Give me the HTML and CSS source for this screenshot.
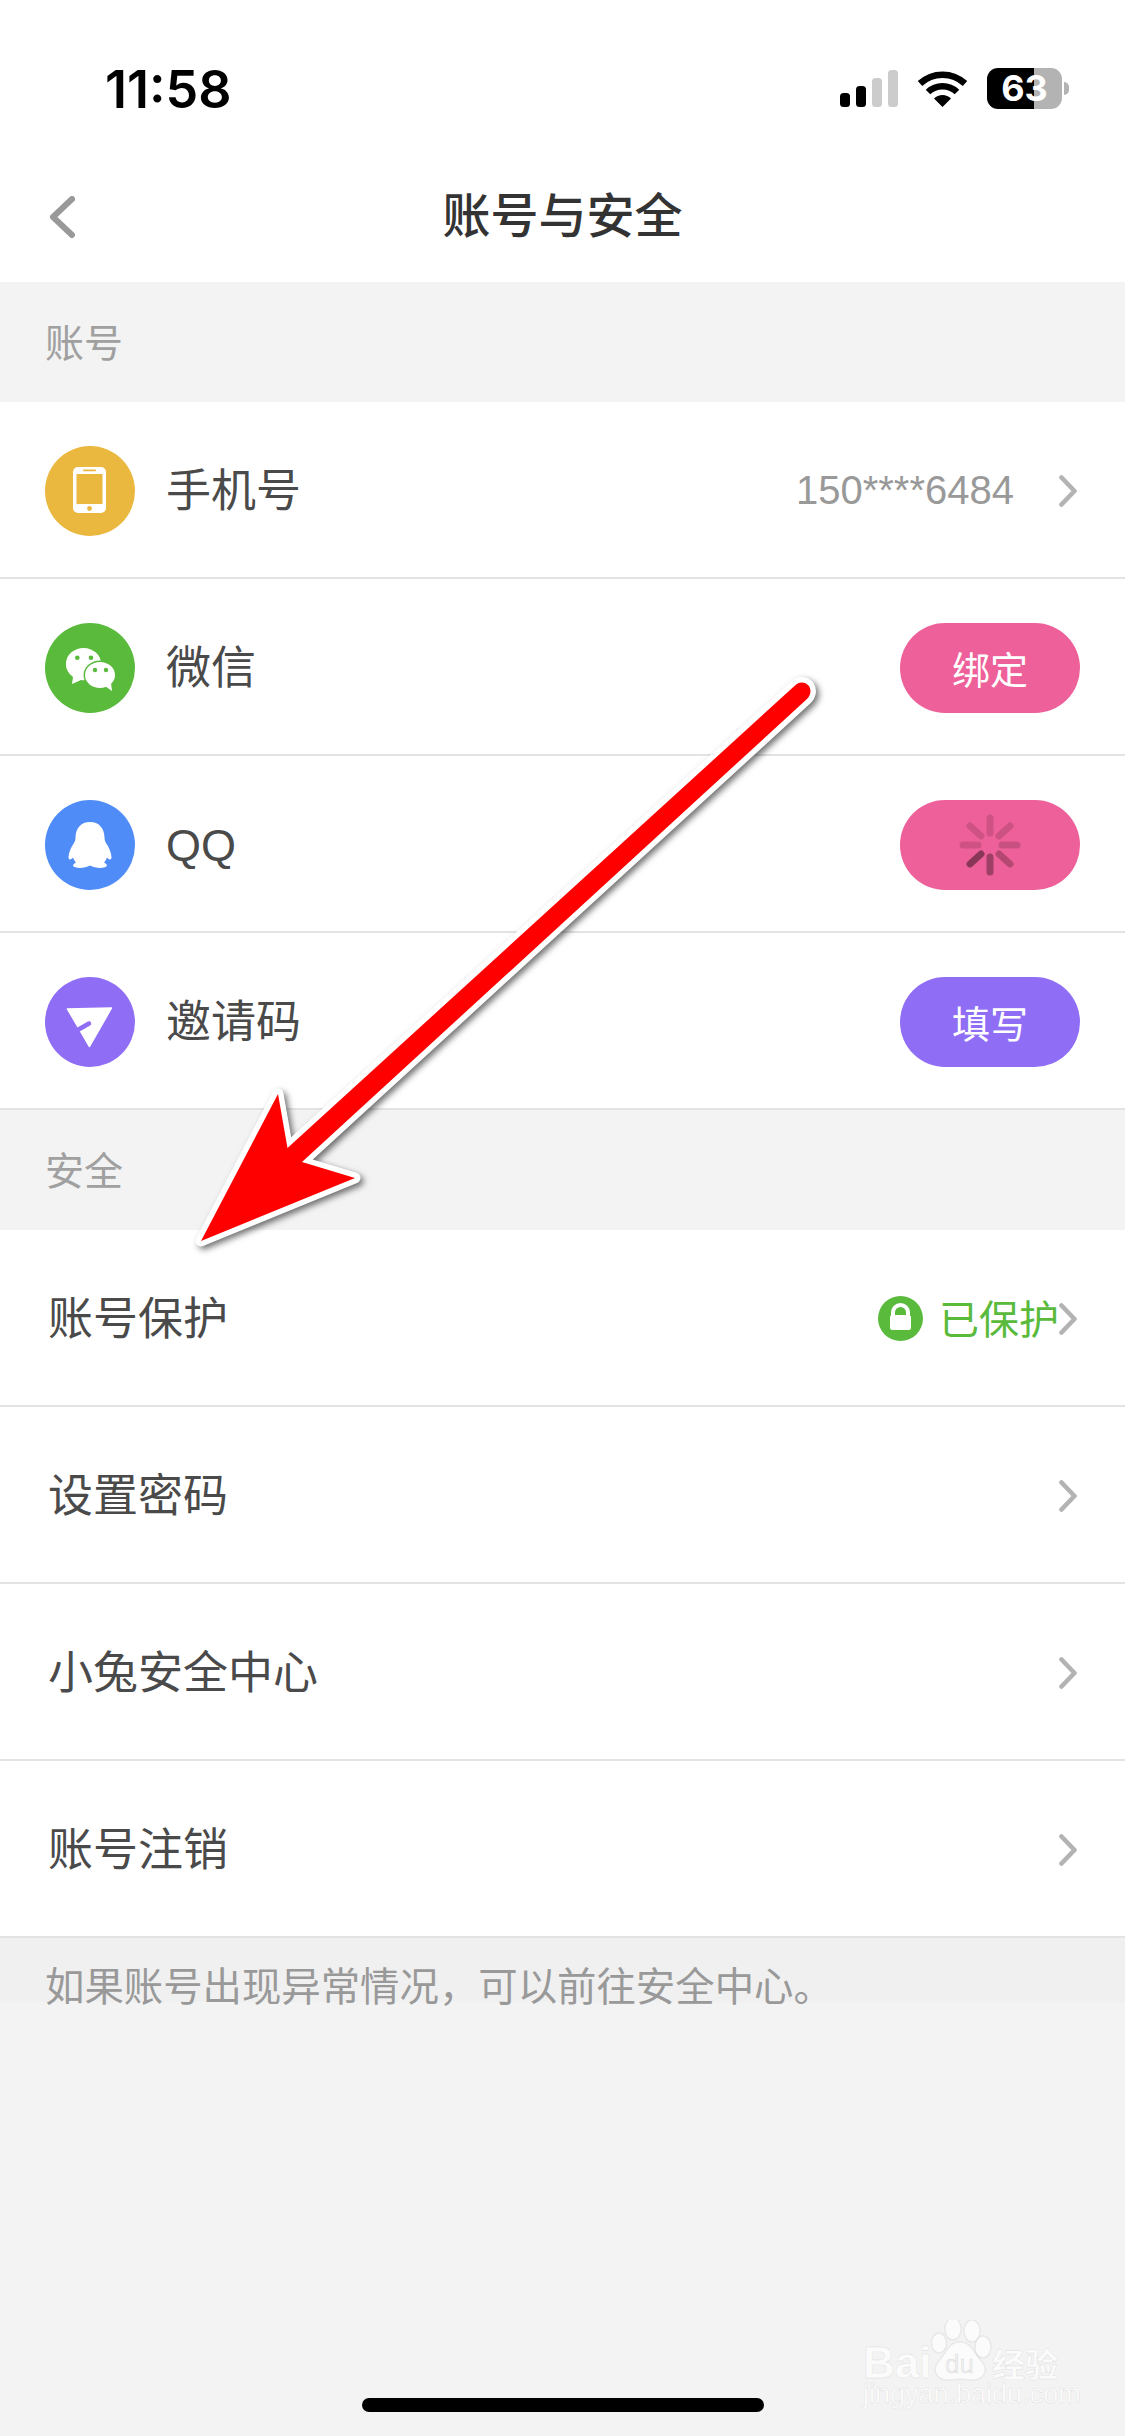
FILE: index.html
```html
<!DOCTYPE html>
<html lang="zh-CN">
<head>
<meta charset="utf-8">
<title>账号与安全</title>
<link rel="stylesheet" href="styles.css">
</head>
<body>
<div class="page">
  <header class="top">
    <div class="status">
      <span class="time">11:58</span>
      <div class="status-icons">
        <svg class="signal" width="58" height="37" viewBox="0 0 58 37"><rect x="0" y="23" width="10" height="14" rx="3.5" fill="#000"/><rect x="16" y="16" width="10" height="21" rx="3.5" fill="#000"/><rect x="32" y="8" width="10" height="29" rx="3.5" fill="#ccc"/><rect x="48" y="0" width="10" height="37" rx="3.5" fill="#ccc"/></svg>
        <svg class="wifi" width="51" height="37" viewBox="0 0 51 37"><path d="M3 13.5A33 33 0 0 1 48 13.5" fill="none" stroke="#000" stroke-width="6.5"/><path d="M11 22A21 21 0 0 1 40 22" fill="none" stroke="#000" stroke-width="6.5"/><path d="M25.5 37L17 28.5A12 12 0 0 1 34 28.5Z" fill="#000"/></svg>
        <div class="battery-wrap"><div class="battery">63</div><span class="battery-tip"></span></div>
      </div>
    </div>
    <nav class="nav">
      <svg class="back" width="26" height="42" viewBox="0 0 26 42"><path d="M23 3L4 21L23 39" fill="none" stroke="#999" stroke-width="6" stroke-linecap="round" stroke-linejoin="round"/></svg>
      <h1 class="title">账号与安全</h1>
    </nav>
  </header>

  <div class="section-head">账号</div>
  <ul class="list">
    <li class="row">
      <div class="row-left">
        <span class="circle c-yellow"><svg width="90" height="90" viewBox="0 0 90 90"><rect x="28" y="21" width="33" height="46" rx="5" fill="#fff"/><rect x="31.5" y="28" width="26" height="30" fill="#ebb83f"/><rect x="38" y="23.5" width="13" height="1.8" rx=".9" fill="#ebb83f"/><circle cx="44.5" cy="62.5" r="2.4" fill="#ebb83f"/></svg></span>
        <span class="label">手机号</span>
      </div>
      <div class="row-right">
        <span class="phone">150****6484</span>
        <svg class="chev" width="18" height="32" viewBox="0 0 18 32"><path d="M2.5 2.5L15.5 16L2.5 29.5" fill="none" stroke="#b3b3b3" stroke-width="4.6" stroke-linecap="round" stroke-linejoin="round"/></svg>
      </div>
    </li>
    <li class="row">
      <div class="row-left">
        <span class="circle c-green"><svg width="90" height="90" viewBox="0 0 90 90"><path d="M27 61L28 54A17.5 15.5 0 1 1 36 57Z" fill="#fff"/><ellipse cx="38.5" cy="40.5" rx="17.5" ry="15.5" fill="#fff"/><circle cx="32.3" cy="34.7" r="2.3" fill="#59ba3c"/><circle cx="46" cy="34.7" r="2.3" fill="#59ba3c"/><ellipse cx="55" cy="52" rx="16.5" ry="14.5" fill="#59ba3c"/><ellipse cx="55" cy="52" rx="15" ry="13" fill="#fff"/><path d="M60 63L67 68L66 60Z" fill="#fff"/><circle cx="50" cy="47" r="2.2" fill="#59ba3c"/><circle cx="61" cy="47" r="2.2" fill="#59ba3c"/></svg></span>
        <span class="label">微信</span>
      </div>
      <div class="row-right"><span class="pill p-pink">绑定</span></div>
    </li>
    <li class="row">
      <div class="row-left">
        <span class="circle c-blue"><svg width="90" height="90" viewBox="0 0 90 90"><path d="M45 22C36 22 31 28 30.500 37C30.500 40 30 41 29 43C26 47 24 52 23.500 57C23.500 60 25 60.500 28 57.500C29 60 30 61.500 31 62.500C28.500 64 27.500 65 28.500 66.500C31 68.500 40 68.500 45 65.500C50 68.500 59 68.500 61.500 66.500C62.500 65 61.500 64 59 62.500C60 61.500 61 60 62 57.500C65 60.500 66.500 60 66.500 57C66 52 64 47 61 43C60 41 59.500 40 59.500 37C59 28 54 22 45 22Z" fill="#fff"/></svg></span>
        <span class="label">QQ</span>
      </div>
      <div class="row-right"><span class="pill p-pink">
        <svg width="64" height="64" viewBox="-32 -32 64 64" stroke="#000" stroke-width="7" stroke-linecap="round">
          <line x1="0" y1="-12" x2="0" y2="-27" opacity=".13"/>
          <line x1="9" y1="-9" x2="20" y2="-19" opacity=".14"/>
          <line x1="12" y1="0" x2="27" y2="0" opacity=".15"/>
          <line x1="9" y1="9" x2="20" y2="19" opacity=".24"/>
          <line x1="0" y1="12" x2="0" y2="27" opacity=".33"/>
          <line x1="-9" y1="9" x2="-20" y2="19" opacity=".42"/>
          <line x1="-12" y1="0" x2="-27" y2="0" opacity=".13"/>
          <line x1="-9" y1="-9" x2="-20" y2="-19" opacity=".13"/>
        </svg></span></div>
    </li>
    <li class="row">
      <div class="row-left">
        <span class="circle c-purple"><svg width="90" height="90" viewBox="0 0 90 90"><path d="M22.500 32L66.500 31L44.500 69.500Z" fill="#fff" stroke="#fff" stroke-width="1.500" stroke-linejoin="round"/><path d="M24 58L44 46.500" fill="none" stroke="#8f6ef5" stroke-width="4.500" stroke-linecap="round"/></svg></span>
        <span class="label">邀请码</span>
      </div>
      <div class="row-right"><span class="pill p-purple">填写</span></div>
    </li>
  </ul>

  <div class="section-head">安全</div>
  <ul class="list">
    <li class="row plain">
      <span class="label">账号保护</span>
      <div class="row-right">
        <span class="lock"><svg width="45" height="45" viewBox="0 0 45 45"><circle cx="22.500" cy="22.500" r="22.500" fill="#59ba3c"/><path d="M15 20V16.500A7.500 7.500 0 0 1 30 16.500V20" fill="none" stroke="#fff" stroke-width="4"/><rect x="12" y="19" width="21" height="15" rx="2.500" fill="#fff"/></svg></span>
        <span class="safe">已保护</span>
        <svg class="chev tight" width="18" height="32" viewBox="0 0 18 32"><path d="M2.500 2.500L15.500 16L2.500 29.500" fill="none" stroke="#b3b3b3" stroke-width="4.600" stroke-linecap="round" stroke-linejoin="round"/></svg>
      </div>
    </li>
    <li class="row plain">
      <span class="label">设置密码</span>
      <div class="row-right"><svg class="chev" width="18" height="32" viewBox="0 0 18 32"><path d="M2.500 2.500L15.500 16L2.500 29.500" fill="none" stroke="#b3b3b3" stroke-width="4.600" stroke-linecap="round" stroke-linejoin="round"/></svg></div>
    </li>
    <li class="row plain">
      <span class="label">小兔安全中心</span>
      <div class="row-right"><svg class="chev" width="18" height="32" viewBox="0 0 18 32"><path d="M2.500 2.500L15.500 16L2.500 29.500" fill="none" stroke="#b3b3b3" stroke-width="4.600" stroke-linecap="round" stroke-linejoin="round"/></svg></div>
    </li>
    <li class="row plain">
      <span class="label">账号注销</span>
      <div class="row-right"><svg class="chev" width="18" height="32" viewBox="0 0 18 32"><path d="M2.500 2.500L15.500 16L2.500 29.500" fill="none" stroke="#b3b3b3" stroke-width="4.600" stroke-linecap="round" stroke-linejoin="round"/></svg></div>
    </li>
  </ul>
  <div class="foot">如果账号出现异常情况，可以前往安全中心。</div>

  <svg class="arrow" width="1125" height="2436" viewBox="0 0 1125 2436">
    <g class="arrow-g">
      <path d="M809 686C812 691 810 696 807 699L302 1162L355 1178L201 1241L278 1094L287.500 1148L795 685.500C799 681.500 805 681.500 809 686Z" fill="#fff" stroke="#fff" stroke-width="11" stroke-linejoin="round"/>
    </g>
    <path d="M809 686C812 691 810 696 807 699L302 1162L355 1178L201 1241L278 1094L287.500 1148L795 685.500C799 681.500 805 681.500 809 686Z" fill="#f00"/>
  </svg>

  <svg class="mark" width="220" height="100" viewBox="0 0 220 100">
    <g class="paw">
      <ellipse cx="79" cy="23" rx="7.500" ry="10"/>
      <ellipse cx="93" cy="9" rx="8" ry="11"/>
      <ellipse cx="112" cy="11" rx="8" ry="11"/>
      <ellipse cx="123" cy="27" rx="8" ry="11"/>
      <path d="M100 22C112 22 114 34 122 42C130 52 122 61 110 60C104 59 96 59 90 60C80 61 70 53 78 42C86 34 88 22 100 22Z"/>
    </g>
    <text class="mk-bai" x="3" y="58">Bai</text>
    <text class="mk-du" x="85" y="53">du</text>
    <text class="mk-cn" x="132" y="57">经验</text>
    <text class="mk-url" x="3" y="83">jingyan.baidu.com</text>
  </svg>

  <div class="home-bar"></div>
</div>
</body>
</html>
```
FILE: styles.css
```css
* { box-sizing: border-box; }
html, body { margin: 0; padding: 0; }
body {
  width: 1125px;
  height: 2436px;
  overflow: hidden;
  background: #f3f3f3;
  font-family: "Liberation Sans", "Noto Sans CJK SC", sans-serif;
}
.page { position: relative; width: 1125px; height: 2436px; overflow: hidden; }

.top { background: #fff; height: 282px; }
.status {
  height: 148px;
  padding: 68px 56px 39px 105px;
  display: flex;
  align-items: center;
  justify-content: space-between;
}
.time {
  font-family: Inter, "Liberation Sans", sans-serif;
  font-weight: 600;
  font-size: 52px;
  line-height: 41px;
  padding-top: 2px;
  color: #000;
}
.status-icons { display: flex; align-items: center; gap: 19px; }
.status-icons svg { display: block; }
.battery-wrap { display: flex; align-items: center; gap: 2px; }
.battery {
  width: 75px;
  height: 41px;
  border-radius: 11px;
  background: linear-gradient(90deg, #000 0, #000 62.6%, #b3b3b3 62.6%);
  color: #fff;
  font-weight: 700;
  font-size: 36px;
  line-height: 41px;
  text-align: center;
  font-family: Inter, "Liberation Sans", sans-serif;
}
.battery-tip {
  width: 5px;
  height: 13px;
  background: #b3b3b3;
  border-radius: 0 6px 6px 0;
}
.nav {
  height: 134px;
  display: grid;
  grid-template-columns: 1fr auto 1fr;
  align-items: center;
  padding: 3px 49px 0;
}
.back { display: block; }
.title {
  margin: 0;
  font-size: 48px;
  font-weight: 500;
  color: #333;
  line-height: 66px;
}

.section-head {
  height: 120px;
  padding: 0 45px 5px;
  display: flex;
  align-items: center;
  font-size: 39px;
  color: #a0a0a0;
  background: #f3f3f3;
}
.list { list-style: none; margin: 0; padding: 0; background: #fff; }
.row {
  height: 177px;
  border-bottom: 2px solid #e3e3e3;
  padding: 2px 45px 0;
  display: flex;
  align-items: center;
  justify-content: space-between;
}
.row.plain { padding-left: 48px; padding-right: 48px; }
.row-left { display: flex; align-items: center; gap: 31px; }
.row-right { display: flex; align-items: center; }
.row-right .chev { margin-right: 3px; }
.row.plain .chev { margin-right: 0; }
.circle {
  width: 90px;
  height: 90px;
  border-radius: 50%;
  display: block;
}
.circle svg { display: block; }
.c-yellow { background: #ebb83f; }
.c-green { background: #59ba3c; }
.c-blue { background: #4f8cf7; }
.c-purple { background: #8f6ef5; }
.label { font-size: 45px; color: #4a4a4a; line-height: 60px; padding-top: 2px; }
.phone { font-size: 40px; color: #999; margin-right: 45px; }
.pill {
  width: 180px;
  height: 90px;
  border-radius: 45px;
  display: flex;
  align-items: center;
  justify-content: center;
  color: #fff;
  font-size: 38px;
}
.p-pink { background: #ee6099; }
.p-purple { background: #8f6ef5; }
.lock { display: block; margin-right: 16px; }
.lock svg { display: block; }
.safe { font-size: 40px; color: #59ba3c; line-height: 56px; padding-top: 2px; }
.chev { display: block; flex: none; }

.foot {
  height: 64px;
  background: #f0f0f0;
  padding: 21px 45px 0;
  font-size: 39.4px;
  line-height: 56px;
  color: #999;
  white-space: nowrap;
}

.arrow { position: absolute; left: 0; top: 0; pointer-events: none; }
.arrow-g { filter: drop-shadow(3px 3px 3px rgba(0, 0, 0, .55)); }

.mark { position: absolute; left: 860px; top: 2320px; }
.paw { fill: #fbfbfb; stroke: rgba(0, 0, 0, .06); stroke-width: 1.5; }
.mk-bai, .mk-cn, .mk-url, .mk-du { stroke: rgba(0, 0, 0, .07); stroke-width: 1; }
.mk-bai { font-family: "Liberation Sans", sans-serif; font-weight: 700; font-size: 44px; fill: #fbfbfb; }
.mk-du { font-family: "Liberation Sans", sans-serif; font-size: 26px; fill: #eee; }
.mk-cn { font-family: "Noto Sans CJK SC", sans-serif; font-weight: 700; font-size: 33px; fill: #fbfbfb; }
.mk-url { font-family: "Liberation Sans", sans-serif; font-size: 27px; fill: #fbfbfb; }

.home-bar {
  position: absolute;
  left: 362px;
  top: 2398px;
  width: 402px;
  height: 14px;
  border-radius: 7px;
  background: #000;
}
```
